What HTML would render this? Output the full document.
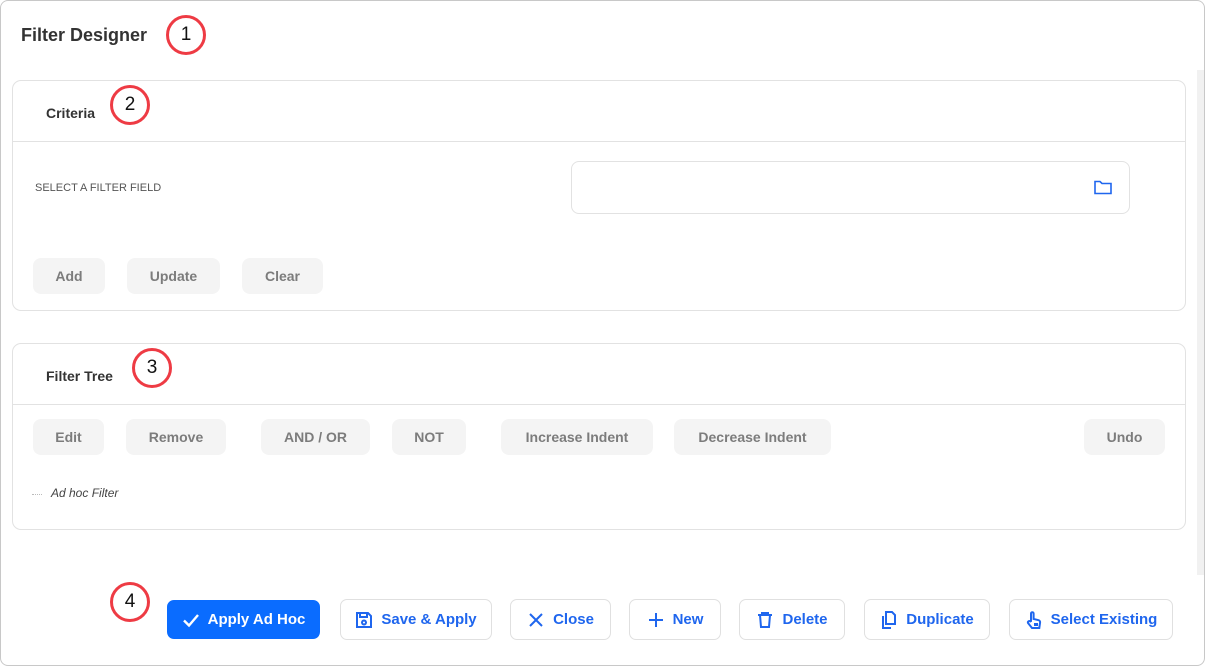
<!DOCTYPE html>
<html><head><style>
*{box-sizing:border-box;margin:0;padding:0}
body{width:1205px;height:666px;background:#fff;font-family:"Liberation Sans",sans-serif;position:relative;overflow:hidden}
.a{position:absolute}
.frame{left:0;top:0;width:1205px;height:666px;border:1px solid #c8c8c8;border-radius:8px}
.card{border:1px solid #e2e2e2;border-radius:9px;background:#fff}
.circ{width:40px;height:40px;border:3px solid #ee3b44;border-radius:50%;font-size:19px;color:#111;text-align:center;line-height:34px}
.gb{background:#f4f4f4;border-radius:8px;color:#7c7c7c;font-weight:bold;font-size:14px;text-align:center;line-height:36px;height:36px}
.bb{border:1px solid #e0e0e0;border-radius:7px;color:#1f66ee;font-weight:bold;font-size:15px;height:41px;display:flex;align-items:center;justify-content:center;gap:8px;background:#fff}
.bb svg{width:18px;height:18px;fill:none;stroke:#1f66ee;stroke-width:2}
</style></head><body>
<div class="a frame"></div>
<div class="a" style="left:1197px;top:70px;width:7px;height:505px;background:#f1f1f1"></div>
<div class="a" style="left:21px;top:25px;font-size:18px;font-weight:bold;color:#333">Filter Designer</div>
<div class="a circ" style="left:166px;top:15px">1</div>

<div class="a card" style="left:12px;top:80px;width:1174px;height:231px"></div>
<div class="a" style="left:13px;top:141px;width:1172px;height:1px;background:#e2e2e2"></div>
<div class="a" style="left:46px;top:105px;font-size:14px;font-weight:bold;color:#333">Criteria</div>
<div class="a circ" style="left:110px;top:85px">2</div>
<div class="a" style="left:35px;top:182px;font-size:11px;color:#555">SELECT A FILTER FIELD</div>
<div class="a" style="left:571px;top:161px;width:559px;height:53px;border:1px solid #e2e2e2;border-radius:8px"></div>
<svg class="a" style="left:1094px;top:180px" width="18" height="15" viewBox="0 0 18 15"><path d="M1 1.5h5l2 2h9v10H1z" fill="none" stroke="#1f66ee" stroke-width="1.6"/></svg>
<div class="a gb" style="left:33px;top:258px;width:72px">Add</div>
<div class="a gb" style="left:127px;top:258px;width:93px">Update</div>
<div class="a gb" style="left:242px;top:258px;width:81px">Clear</div>

<div class="a card" style="left:12px;top:343px;width:1174px;height:187px"></div>
<div class="a" style="left:13px;top:404px;width:1172px;height:1px;background:#e2e2e2"></div>
<div class="a" style="left:46px;top:368px;font-size:14px;font-weight:bold;color:#333">Filter Tree</div>
<div class="a circ" style="left:132px;top:348px">3</div>
<div class="a gb" style="left:33px;top:419px;width:71px">Edit</div>
<div class="a gb" style="left:126px;top:419px;width:100px">Remove</div>
<div class="a gb" style="left:261px;top:419px;width:109px">AND / OR</div>
<div class="a gb" style="left:392px;top:419px;width:74px">NOT</div>
<div class="a gb" style="left:501px;top:419px;width:152px">Increase Indent</div>
<div class="a gb" style="left:674px;top:419px;width:157px">Decrease Indent</div>
<div class="a gb" style="left:1084px;top:419px;width:81px">Undo</div>
<div class="a" style="left:32px;top:494px;width:10px;border-top:1px dotted #bbb"></div>
<div class="a" style="left:51px;top:486px;font-size:12px;font-style:italic;color:#444">Ad hoc Filter</div>

<div class="a circ" style="left:110px;top:582px">4</div>
<div class="a bb" style="left:167px;top:600px;width:153px;height:39px;background:#0a6cff;border-color:#0a6cff;color:#fff"><svg viewBox="0 0 18 18" style="stroke:#fff;stroke-width:2.4"><path d="M2 9.5l5 5L16 4"/></svg>Apply Ad Hoc</div>
<div class="a bb" style="left:340px;top:599px;width:152px"><svg viewBox="0 0 18 18"><path d="M2 2h11l3 3v11H2z M5 2v4h7V2 M9 9.5a2 2 0 1 0 .01 0z"/></svg>Save &amp; Apply</div>
<div class="a bb" style="left:510px;top:599px;width:101px"><svg viewBox="0 0 18 18"><path d="M3 3l12 12M15 3L3 15"/></svg>Close</div>
<div class="a bb" style="left:629px;top:599px;width:92px"><svg viewBox="0 0 18 18"><path d="M9 2v14M2 9h14"/></svg>New</div>
<div class="a bb" style="left:739px;top:599px;width:106px"><svg viewBox="0 0 18 18"><path d="M2 4h14M6 4V2h6v2M4 4l1 12h8l1-12"/></svg>Delete</div>
<div class="a bb" style="left:864px;top:599px;width:126px"><svg viewBox="0 0 18 18"><path d="M6 1h6l3 3v9H6z M3 5v12h8"/></svg>Duplicate</div>
<div class="a bb" style="left:1009px;top:599px;width:164px"><svg viewBox="0 0 18 18"><path d="M6 10V2.5a1.3 1.3 0 0 1 2.6 0V8l5 1.2a2 2 0 0 1 1.5 2.2L14.3 17H7l-4-5a1.4 1.4 0 0 1 2.2-1.6z M10 12v3M12 12v3"/></svg>Select Existing</div>
</body></html>
